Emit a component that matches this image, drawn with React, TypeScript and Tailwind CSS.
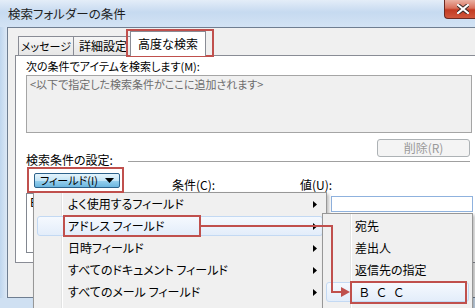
import React from "react";

const MENU_ITEMS = [
  { label: "よく使用するフィールド", active: false },
  { label: "アドレス フィールド", active: true },
  { label: "日時フィールド", active: false },
  { label: "すべてのドキュメント フィールド", active: false },
  { label: "すべてのメール フィールド", active: false },
];

const SUB_ITEMS = [
  { label: "宛先", active: false },
  { label: "差出人", active: false },
  { label: "返信先の指定", active: false },
  { label: "ＢＣＣ", active: true },
];

function Arrow() {
  return (
    <svg width="4" height="7" viewBox="0 0 4 7" className="ml-auto mr-[9px]">
      <polygon points="0,0 4,3.5 0,7" fill="#000" />
    </svg>
  );
}

function Highlight() {
  return (
    <div className="absolute inset-x-[3px] inset-y-[1px] rounded-[3px] border border-[#c3d9f3] bg-[linear-gradient(180deg,#f5f9fe_0%,#e3edfa_100%)]" />
  );
}

export default function App() {
  return (
    <div className="relative w-[475px] h-[308px] overflow-hidden whitespace-nowrap bg-[#cfe0f2] font-['Noto_Sans_CJK_JP',sans-serif] [font-feature-settings:'palt'] text-[12px] text-black">
      {/* Title bar */}
      <div className="flex h-[27px] justify-between bg-[linear-gradient(180deg,#e4edf8_0%,#c6daf0_45%,#d3e3f4_100%)]">
        <div className="self-center pl-[8px] text-[12.5px] leading-[16px] text-[#1e1e1e]">
          検索フォルダーの条件
        </div>
        <div className="flex h-[19px] w-[31px] items-center justify-center rounded-bl-[4px] border-b border-l border-[#6b2a22] bg-[linear-gradient(180deg,#eab1a3_0%,#d9705c_45%,#c23a22_55%,#d0573c_100%)] pl-[6px]">
          <svg width="12" height="10" viewBox="0 0 12 10">
            <path
              d="M1 1 L11 9 M11 1 L1 9"
              stroke="#3b2a28"
              strokeWidth="4"
              strokeLinecap="square"
            />
            <path
              d="M1 1 L11 9 M11 1 L1 9"
              stroke="#ffffff"
              strokeWidth="2.2"
              strokeLinecap="square"
            />
          </svg>
        </div>
      </div>

      {/* Window body */}
      <div className="flex h-[271px]">
        <div className="w-[7px] bg-[linear-gradient(90deg,#bfd6ee_0%,#dce8f5_100%)]" />
        <div className="flex-1 flex flex-col bg-[#f0f0f0] border-l border-t border-b border-[#6f7e91] text-[11px]">
          {/* Tabs */}
          <div className="mt-[3px] ml-[7px] flex h-[24px] items-end pl-[3px] text-[12px]">
            <div className="flex h-[19px] w-[56px] items-center justify-center border-l border-t border-r border-[#898c95] bg-[linear-gradient(180deg,#f6f6f6_0%,#e6e6e6_100%)] text-[11px]">
              メッセージ
            </div>
            <div className="flex h-[19px] w-[58px] items-center overflow-hidden pl-[5px] border-t border-r border-[#898c95] bg-[linear-gradient(180deg,#f6f6f6_0%,#e6e6e6_100%)]">
              詳細設定
            </div>
            <div className="relative z-10 -ml-[2px] -mb-px flex h-[25px] w-[76px] items-center justify-center border-l border-t border-r border-[#898c95] bg-white">
              高度な検索
            </div>
          </div>

          {/* Tab panel */}
          <div className="ml-[7px] flex h-[208px] flex-col border-l border-t border-b border-[#898c95] bg-white pl-[10px]">
            <div className="mt-[2px] h-[16px] leading-[16px]">
              次の条件でアイテムを検索します(M):
            </div>
            <div className="mt-[1px] h-[58px] w-[446px] border border-[#a5a5a5] bg-[#f0f0f0] pl-[3px] pt-px leading-[14px] text-[#6d6d6d]">
              &lt;以下で指定した検索条件がここに追加されます&gt;
            </div>
            <div className="mt-[6px] flex w-[446px] justify-end pr-[2px]">
              <div className="flex h-[18px] w-[93px] items-center justify-center rounded-[3px] border border-[#adb2b5] bg-[#f4f4f4] text-[12px] text-[#9a9a9a]">
                削除(R)
              </div>
            </div>
            <div className="-mt-[3px] flex h-[12px] w-[444px] items-center text-[12px] leading-[12px]">
              <span>検索条件の設定:</span>
              <div className="ml-auto mt-[3px] h-px w-[342px] bg-[#a0a0a0]" />
            </div>
            <div className="mt-[7px] flex h-[20px] items-start">
              <div className="ml-[8px] flex h-[15px] w-[86px] items-center rounded-[2px] border border-[#2c628b] bg-[linear-gradient(180deg,#e5f4fc_0%,#c4e5f6_50%,#98d1ef_51%,#6cb6de_100%)] pl-[5px] leading-[13px]">
                <span>フィールド(I)</span>
                <svg width="9" height="5" viewBox="0 0 9 5" className="ml-auto mr-[5px]">
                  <polygon points="0,0 9,0 4.5,5" fill="#000" />
                </svg>
              </div>
              <div className="ml-[52px] mt-[5px] w-[128px] text-[12px] leading-[14px]">条件(C):</div>
              <div className="mt-[5px] text-[12px] leading-[14px]">値(U):</div>
            </div>
            <div className="flex items-start">
              <div className="h-[60px] w-[140px] border border-[#828790] bg-white pl-[3px] text-[12px] leading-[16px]">
                BCC
              </div>
              <div className="ml-auto mr-[2px] mt-[3px] h-[16px] w-[142px] border border-[#8fb2de] bg-white" />
            </div>
          </div>
        </div>
      </div>

      {/* Dropdown menu */}
      <div className="absolute left-[33px] top-[192px] w-[294px] h-[130px] border border-[#979797] bg-[#f0f0f0] shadow-[2px_2px_3px_rgba(0,0,0,0.25)]">
        <div className="absolute left-[27px] top-0 bottom-0 w-px bg-[#e2e3e3]" />
        <div className="absolute left-[28px] top-0 bottom-0 w-px bg-white" />
        {MENU_ITEMS.map((item) => (
          <div key={item.label} className="relative flex h-[22px] items-center">
            {item.active && <Highlight />}
            <span className="relative pl-[34px] leading-[16px]">{item.label}</span>
            <span className="relative ml-auto flex">
              <Arrow />
            </span>
          </div>
        ))}
      </div>

      {/* Sub menu */}
      <div className="absolute left-[322px] top-[213px] w-[151px] h-[110px] border border-[#979797] bg-[#f0f0f0] pt-px shadow-[2px_2px_3px_rgba(0,0,0,0.25)]">
        <div className="absolute left-[27px] top-0 bottom-0 w-px bg-[#e2e3e3]" />
        <div className="absolute left-[28px] top-0 bottom-0 w-px bg-white" />
        {SUB_ITEMS.map((item) => (
          <div key={item.label} className="relative flex h-[22px] items-center">
            {item.active && <Highlight />}
            <span
              className={`relative leading-[16px] ${
                item.active ? "tracking-[8px] pl-[36px]" : "pl-[32px]"
              }`}
            >
              {item.label}
            </span>
          </div>
        ))}
      </div>

      {/* Red annotations */}
      <div className="absolute left-[126px] top-[29px] h-[28px] w-[88px] border-2 border-[#c0504d]" />
      <div className="absolute left-[27px] top-[167px] h-[26px] w-[97px] border-2 border-[#c0504d]" />
      <div className="absolute left-[63px] top-[215px] h-[22px] w-[138px] border-2 border-[#c0504d]" />
      <div className="absolute left-[350px] top-[281px] h-[23px] w-[117px] border-2 border-[#c0504d]" />
      <svg
        className="pointer-events-none absolute left-0 top-0"
        width="475"
        height="308"
        viewBox="0 0 475 308"
      >
        <polyline
          points="200,226 332,226 332,292 343,292"
          fill="none"
          stroke="#c0504d"
          strokeWidth="2"
        />
        <polygon points="341,287 350,292 341,297" fill="#c0504d" />
      </svg>
    </div>
  );
}
